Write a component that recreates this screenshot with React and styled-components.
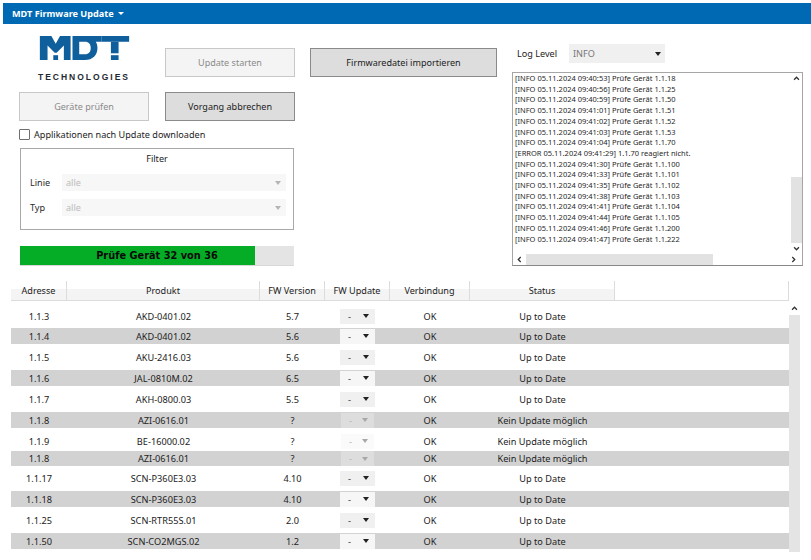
import React from "react";
import styled, { createGlobalStyle } from "styled-components";

const Global = createGlobalStyle`
  html, body { margin: 0; padding: 0; background: #fff; }
  body { font-family: "Noto Sans", "Open Sans", sans-serif; color: #1c1c1c; }
`;

const Page = styled.div`
  width: 811px;
  height: 560px;
  padding: 3px 0 0 3px;
  box-sizing: border-box;
  overflow: hidden;
  font-size: 9.1px;
`;
const TitleBar = styled.div`
  height: 21px;
  background: #0069b4;
  color: #fff;
  display: flex;
  align-items: center;
  gap: 4px;
  padding-left: 9px;
  font-size: 9.15px;
  font-weight: 700;
`;
const TitleCaret = styled.span`
  width: 0;
  height: 0;
  border-left: 3px solid transparent;
  border-right: 3px solid transparent;
  border-top: 3px solid #fff;
`;
const Top = styled.div`
  height: 257px;
  display: flex;
  padding-left: 16px;
`;
const LeftCol = styled.div`
  width: 276px;
  padding-top: 11px;
`;
const ButtonGrid = styled.div`
  display: grid;
  grid-template-columns: 130px 130px;
  column-gap: 16px;
  row-gap: 10px;
`;
const LogoCell = styled.div`
  height: 47px;
  display: flex;
  flex-direction: column;
  align-items: center;
`;
const LogoSvg = styled.svg`
  display: block;
  width: 93px;
  height: 25px;
  margin-top: 1px;
`;
const LogoText = styled.div`
  margin-top: 12px;
  font-family: "Liberation Sans", sans-serif;
  font-size: 8.5px;
  font-weight: 700;
  letter-spacing: 2px;
  color: #1f2a33;
  line-height: 10px;
  white-space: nowrap;
`;
const Button = styled.div`
  height: 29px;
  box-sizing: border-box;
  display: flex;
  align-items: center;
  justify-content: center;
  margin-top: ${(p) => p.$top || 0}px;
  border: 1px solid ${(p) => (p.$active ? "#8a8a8a" : "#c8c8c8")};
  background: ${(p) => (p.$active ? "#dddddd" : "#f4f4f4")};
  color: ${(p) => (p.$active ? "#1c1c1c" : "#8b8b8b")};
  font-size: 9.05px;
`;
const CheckRow = styled.div`
  display: flex;
  align-items: center;
  gap: 4px;
  margin-top: 8px;
  height: 11px;
  white-space: nowrap;
`;
const Check = styled.span`
  width: 11px;
  height: 11px;
  box-sizing: border-box;
  border: 1px solid #6f6f6f;
  background: #fff;
  border-radius: 1px;
`;
const FilterBox = styled.div`
  margin: 8px 0 0 1px;
  width: 274px;
  height: 82px;
  box-sizing: border-box;
  border: 1px solid #a8a8a8;
  padding-left: 9px;
`;
const FilterTitle = styled.div`
  text-align: center;
  line-height: 14px;
  margin: 3px 0 8px -9px;
`;
const FilterRow = styled.div`
  display: flex;
  align-items: center;
  height: 17px;
  margin-bottom: 8px;
`;
const FilterLabel = styled.div`
  width: 32px;
  color: #2a2a2a;
`;
const DisabledSelect = styled.div`
  width: 224px;
  height: 17px;
  background: #f7f7f7;
  color: #bcbcbc;
  display: flex;
  align-items: center;
  justify-content: space-between;
  padding: 0 5px 0 4px;
  box-sizing: border-box;
`;
const Caret = styled.span`
  width: 0;
  height: 0;
  border-left: 3px solid transparent;
  border-right: 3px solid transparent;
  border-top: 4px solid ${(p) => p.$color || "#222"};
`;
const Progress = styled.div`
  position: relative;
  margin: 16px 0 0 1px;
  width: 274px;
  height: 20px;
  background: #e4e4e4;
  border-bottom: 1px solid #d8d8d8;
  box-sizing: border-box;
`;
const ProgressFill = styled.div`
  height: 100%;
  background: #05ac25;
`;
const ProgressLabel = styled.div`
  position: absolute;
  inset: 0;
  display: flex;
  align-items: center;
  justify-content: center;
  font-family: "DejaVu Sans", sans-serif;
  font-weight: 700;
  font-size: 9.8px;
  color: #0a0a0a;
`;
const MiddleCol = styled.div`
  width: 187px;
  margin-left: 15px;
  padding-top: 24px;
`;
const RightCol = styled.div`
  width: 291px;
  margin-left: 15px;
  padding-top: 20px;
`;
const LevelRow = styled.div`
  display: flex;
  align-items: center;
  height: 19px;
  padding-left: 5px;
`;
const LevelLabel = styled.div`
  width: 52px;
`;
const LevelSelect = styled.div`
  width: 96px;
  height: 19px;
  background: #f0f0f0;
  color: #777;
  display: flex;
  align-items: center;
  justify-content: space-between;
  padding: 0 4px 0 4px;
  box-sizing: border-box;
`;
const LogBox = styled.div`
  margin-top: 9px;
  height: 194px;
  box-sizing: border-box;
  border: 1px solid #a6a6a6;
  border-bottom-color: #888;
  display: flex;
  flex-direction: column;
`;
const LogMain = styled.div`
  flex: 1;
  min-height: 0;
  display: flex;
`;
const LogLines = styled.div`
  flex: 1;
  padding: 0 0 0 2px;
  font-size: 7.5px;
  line-height: 10.7px;
  white-space: nowrap;
  color: #1f1f1f;
`;
const VScroll = styled.div`
  width: ${(p) => p.$w}px;
  background: ${(p) => p.$track};
  display: flex;
  flex-direction: column;
  align-items: center;
  flex: none;
`;
const ScrollEnd = styled.div`
  height: ${(p) => p.$h}px;
  width: 100%;
  background: #fff;
  display: flex;
  align-items: center;
  justify-content: center;
  flex: none;
`;
const VThumb = styled.div`
  width: 100%;
  flex: 1;
  background: #e2e2e2;
`;
const HScroll = styled.div`
  height: 11px;
  display: flex;
  align-items: center;
  flex: none;
`;
const HEnd = styled.div`
  width: ${(p) => p.$w}px;
  height: 100%;
  display: flex;
  align-items: center;
  justify-content: center;
  flex: none;
`;
const HThumb = styled.div`
  width: 187px;
  height: 100%;
  background: #e2e2e2;
  flex: none;
`;
const HSpace = styled.div`
  flex: 1;
`;
const TableWrap = styled.div`
  margin-left: 8px;
`;
const HeaderRow = styled.div`
  display: grid;
  grid-template-columns: 56px 193px 65px 65px 80px 145px 174px;
  width: 778px;
  height: 20px;
`;
const HeaderCell = styled.div`
  display: flex;
  align-items: center;
  justify-content: center;
  box-sizing: border-box;
  border-right: 1px solid #dcdcdc;
  border-bottom: 1px solid #dcdcdc;
  background: ${(p) => (p.$blank ? "#fff" : "linear-gradient(#fff 0 8px, #f4f4f4 8px)")};
  font-size: 9.1px;
`;
const TableBody = styled.div`
  display: flex;
  height: 251px;
`;
const Rows = styled.div`
  width: 778px;
  padding-top: 7px;
`;
const Row = styled.div`
  display: grid;
  grid-template-columns: 56px 193px 65px 65px 80px 145px 174px;
  align-items: center;
  height: ${(p) => p.$h}px;
  margin-top: ${(p) => p.$gap}px;
  background: ${(p) => (p.$odd ? "#d2d2d2" : "#fff")};
  font-size: 9.2px;
`;
const Cell = styled.div`
  text-align: center;
  white-space: nowrap;
  color: #222;
`;
const CellSelect = styled.div`
  width: ${(p) => (p.$disabled ? 33 : 35)}px;
  height: 15px;
  margin: 0 auto;
  box-sizing: border-box;
  background: ${(p) => (p.$disabled ? (p.$odd ? "#dddddd" : "#fafafa") : p.$odd ? "#f6f6f6" : "#f0f0f0")};
  color: ${(p) => (p.$disabled ? "#b5b5b5" : "#333")};
  display: flex;
  align-items: center;
  justify-content: space-between;
  padding: 0 6px 0 8px;
`;
const Chev = styled.svg`
  display: block;
  width: 7px;
  height: 7px;
  transform: rotate(${(p) => p.$rot}deg);
`;

const Chevron = ({ rot = 0 }) => (
  <Chev viewBox="0 0 8 8" $rot={rot}>
    <path d="M1.2 5.4 4 2.6l2.8 2.8" fill="none" stroke="#333" strokeWidth="1.5" />
  </Chev>
);

const Logo = () => (
  <LogoSvg viewBox="37 36 93 25">
    <g fill="#0f5f9c">
      <path d="M37 36h12l4.500 8 4.500-8H69v25h-7V46l-7.500 7.500h-2L45 46v15h-8z" />
      <rect x="51" y="56" width="5" height="5" />
      <path fillRule="evenodd" d="M71 36h30v6H95.300c1.200 2 1.700 4 1.700 6.500C97 56 92 61 84 61H71zM78 42v13h6c4 0 6-2.500 6-6.500S88 42 84 42z" />
      <rect x="101" y="36" width="29" height="6" />
      <rect x="111" y="42" width="8" height="12" />
      <rect x="111" y="56" width="8" height="5" />
    </g>
  </LogoSvg>
);

const logLines = [
  "[INFO 05.11.2024 09:40:53] Prüfe Gerät 1.1.18",
  "[INFO 05.11.2024 09:40:56] Prüfe Gerät 1.1.25",
  "[INFO 05.11.2024 09:40:59] Prüfe Gerät 1.1.50",
  "[INFO 05.11.2024 09:41:01] Prüfe Gerät 1.1.51",
  "[INFO 05.11.2024 09:41:02] Prüfe Gerät 1.1.52",
  "[INFO 05.11.2024 09:41:03] Prüfe Gerät 1.1.53",
  "[INFO 05.11.2024 09:41:04] Prüfe Gerät 1.1.70",
  "[ERROR 05.11.2024 09:41:29] 1.1.70 reagiert nicht.",
  "[INFO 05.11.2024 09:41:30] Prüfe Gerät 1.1.100",
  "[INFO 05.11.2024 09:41:33] Prüfe Gerät 1.1.101",
  "[INFO 05.11.2024 09:41:35] Prüfe Gerät 1.1.102",
  "[INFO 05.11.2024 09:41:38] Prüfe Gerät 1.1.103",
  "[INFO 05.11.2024 09:41:41] Prüfe Gerät 1.1.104",
  "[INFO 05.11.2024 09:41:44] Prüfe Gerät 1.1.105",
  "[INFO 05.11.2024 09:41:46] Prüfe Gerät 1.1.200",
  "[INFO 05.11.2024 09:41:47] Prüfe Gerät 1.1.222",
];

const UP = "Up to Date";
const NO = "Kein Update möglich";
const rows = [
  ["1.1.3", "AKD-0401.02", "5.7", UP, 0, 16, 0],
  ["1.1.4", "AKD-0401.02", "5.6", UP, 0, 16, 4],
  ["1.1.5", "AKU-2416.03", "5.6", UP, 0, 16, 5],
  ["1.1.6", "JAL-0810M.02", "6.5", UP, 0, 16, 5],
  ["1.1.7", "AKH-0800.03", "5.5", UP, 0, 16, 5],
  ["1.1.8", "AZI-0616.01", "?", NO, 1, 16, 5],
  ["1.1.9", "BE-16000.02", "?", NO, 1, 16, 5],
  ["1.1.8", "AZI-0616.01", "?", NO, 1, 15, 2],
  ["1.1.17", "SCN-P360E3.03", "4.10", UP, 0, 16, 4],
  ["1.1.18", "SCN-P360E3.03", "4.10", UP, 0, 16, 5],
  ["1.1.25", "SCN-RTR55S.01", "2.0", UP, 0, 16, 5],
  ["1.1.50", "SCN-CO2MGS.02", "1.2", UP, 0, 16, 5],
];

const progressShare = 235 / 274;

export default function App() {
  return (
    <Page>
      <Global />
      <TitleBar>
        MDT Firmware Update <TitleCaret />
      </TitleBar>
      <Top>
        <LeftCol>
          <ButtonGrid>
            <LogoCell>
              <Logo />
              <LogoText>TECHNOLOGIES</LogoText>
            </LogoCell>
            <Button $top={13}>Update starten</Button>
            <Button>Geräte prüfen</Button>
            <Button $active>Vorgang abbrechen</Button>
          </ButtonGrid>
          <CheckRow>
            <Check />
            Applikationen nach Update downloaden
          </CheckRow>
          <FilterBox>
            <FilterTitle>Filter</FilterTitle>
            <FilterRow>
              <FilterLabel>Linie</FilterLabel>
              <DisabledSelect>
                alle <Caret $color="#b5b5b5" />
              </DisabledSelect>
            </FilterRow>
            <FilterRow>
              <FilterLabel>Typ</FilterLabel>
              <DisabledSelect>
                alle <Caret $color="#b5b5b5" />
              </DisabledSelect>
            </FilterRow>
          </FilterBox>
          <Progress>
            <ProgressFill style={{ width: `${progressShare * 100}%` }} />
            <ProgressLabel>Prüfe Gerät 32 von 36</ProgressLabel>
          </Progress>
        </LeftCol>
        <MiddleCol>
          <Button $active>Firmwaredatei importieren</Button>
        </MiddleCol>
        <RightCol>
          <LevelRow>
            <LevelLabel>Log Level</LevelLabel>
            <LevelSelect>
              INFO <Caret />
            </LevelSelect>
          </LevelRow>
          <LogBox>
            <LogMain>
              <LogLines>
                {logLines.map((l) => (
                  <div key={l}>{l}</div>
                ))}
              </LogLines>
              <VScroll $w={11} $track="#fff">
                <ScrollEnd $h={11}><Chevron /></ScrollEnd>
                <ScrollEnd $h={93} />
                <VThumb />
                <ScrollEnd $h={11}><Chevron rot={180} /></ScrollEnd>
              </VScroll>
            </LogMain>
            <HScroll>
              <HEnd $w={13}><Chevron rot={-90} /></HEnd>
              <HThumb />
              <HSpace />
              <HEnd $w={18}><Chevron rot={90} /></HEnd>
            </HScroll>
          </LogBox>
        </RightCol>
      </Top>
      <TableWrap>
        <HeaderRow>
          <HeaderCell>Adresse</HeaderCell>
          <HeaderCell>Produkt</HeaderCell>
          <HeaderCell>FW Version</HeaderCell>
          <HeaderCell>FW Update</HeaderCell>
          <HeaderCell>Verbindung</HeaderCell>
          <HeaderCell>Status</HeaderCell>
          <HeaderCell $blank />
        </HeaderRow>
        <TableBody>
          <Rows>
            {rows.map(([addr, prod, ver, status, dis, h, gap], i) => {
              const odd = i % 2 === 1;
              return (
                <Row key={i} $odd={odd} $h={h} $gap={gap}>
                  <Cell>{addr}</Cell>
                  <Cell>{prod}</Cell>
                  <Cell>{ver}</Cell>
                  <Cell>
                    <CellSelect $odd={odd} $disabled={!!dis}>
                      - <Caret $color={dis ? "#a8a8a8" : "#222"} />
                    </CellSelect>
                  </Cell>
                  <Cell>OK</Cell>
                  <Cell>{status}</Cell>
                  <Cell />
                </Row>
              );
            })}
          </Rows>
          <VScroll $w={11} $track="#e4e4e4">
            <ScrollEnd $h={14}><Chevron /></ScrollEnd>
          </VScroll>
        </TableBody>
      </TableWrap>
    </Page>
  );
}
